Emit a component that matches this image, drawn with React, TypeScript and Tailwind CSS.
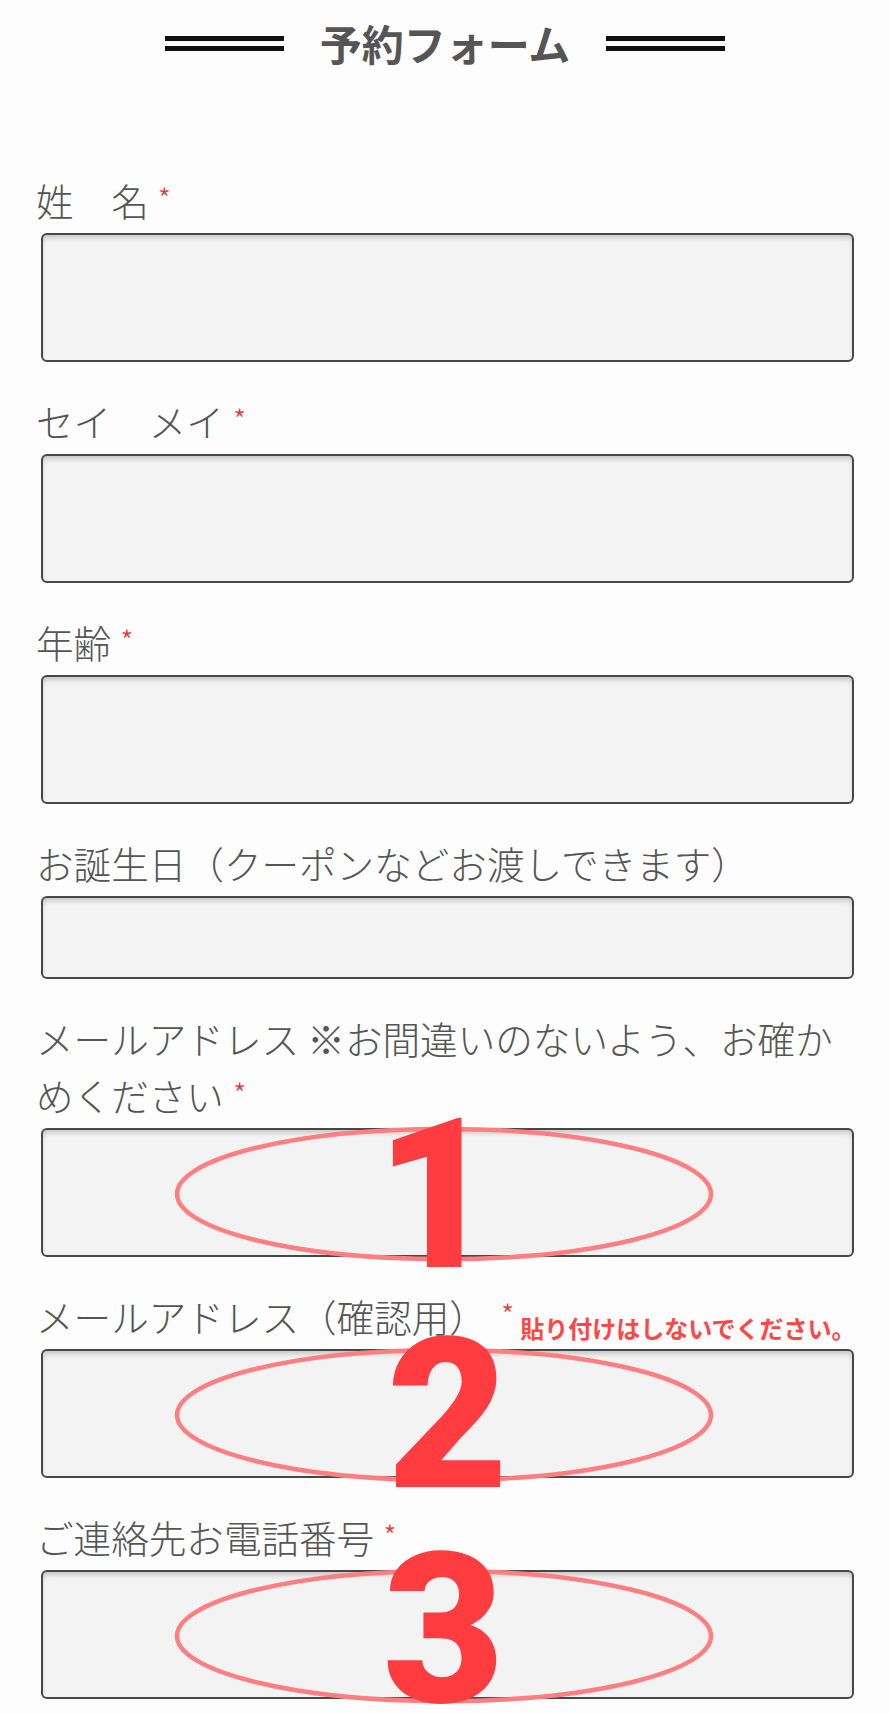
import React from "react";

function Req({ className = "ml-[9px]" }: { className?: string }) {
  return <span className={`align-[5px] text-[30px] leading-none text-[#e53935] ${className}`}>*</span>;
}

function Overlay({ n, pos }: { n: string; pos: string }) {
  return (
    <>
      <svg
        className="pointer-events-none absolute left-0 top-0 overflow-visible"
        width="809"
        height="125"
      >
        <ellipse cx="401" cy="64" rx="267" ry="65" fill="none" stroke="#ff7f80" strokeWidth="4.5" />
      </svg>
      <div className={`pointer-events-none absolute inset-x-0 flex justify-center ${pos}`}>
        <span className="font-['Roboto','Liberation_Sans',sans-serif] text-[210px] font-black leading-none text-[#ff3d40]">
          {n}
        </span>
      </div>
    </>
  );
}

function Box({ h, children }: { h: string; children?: React.ReactNode }) {
  return (
    <div
      className={`relative ml-[5px] ${h} rounded-[6px] border-2 border-[#474747] bg-[#f3f3f4] shadow-[inset_0_4px_5px_-1px_rgba(0,0,0,0.18)]`}
    >
      {children}
    </div>
  );
}

function Label({ children }: { children: React.ReactNode }) {
  return (
    <div className="mt-[30px] mb-[5px] text-[37.6px] font-light leading-[57px] text-[#555555]">
      {children}
    </div>
  );
}

export default function App() {
  return (
    <div className="min-h-screen w-full bg-[#fcfdfc] font-['Noto_Sans_CJK_JP',sans-serif]">
      <div className="px-[36px] pt-[13px] pb-[14px]">
        <div className="mb-[98px] flex items-center justify-center gap-[36px]">
          <div className="h-[15px] w-[119px] border-y-[5px] border-[#111]" />
          <div className="text-[42px] font-bold leading-[60px] text-[#555]">予約フォーム</div>
          <div className="h-[15px] w-[119px] border-y-[5px] border-[#111]" />
        </div>

        <Label>
          姓　名<Req />
        </Label>
        <Box h="h-[129px]" />

        <Label>
          セイ　メイ<Req />
        </Label>
        <Box h="h-[129px]" />

        <Label>
          年齢<Req />
        </Label>
        <Box h="h-[129px]" />

        <Label>お誕生日（クーポンなどお渡しできます）</Label>
        <Box h="h-[83px]" />

        <Label>
          メールアドレス ※お間違いのないよう、お確か
          <br />
          めください<Req />
        </Label>
        <Box h="h-[129px]">
          <Overlay n="1" pos="top-[-40px] -translate-x-[11px]" />
        </Box>

        <Label>
          <span className="whitespace-nowrap">
            メールアドレス（確認用）<Req className="ml-[14px]" />
            <span className="ml-[6px] align-[-6px] text-[24px] font-bold leading-none text-[#ff4545]">
              貼り付けはしないでください。
            </span>
          </span>
        </Label>
        <Box h="h-[129px]">
          <Overlay n="2" pos="top-[-41px]" />
        </Box>

        <Label>
          ご連絡先お電話番号<Req />
        </Label>
        <Box h="h-[129px]">
          <Overlay n="3" pos="top-[-47px] -translate-x-[4px]" />
        </Box>
      </div>
    </div>
  );
}
